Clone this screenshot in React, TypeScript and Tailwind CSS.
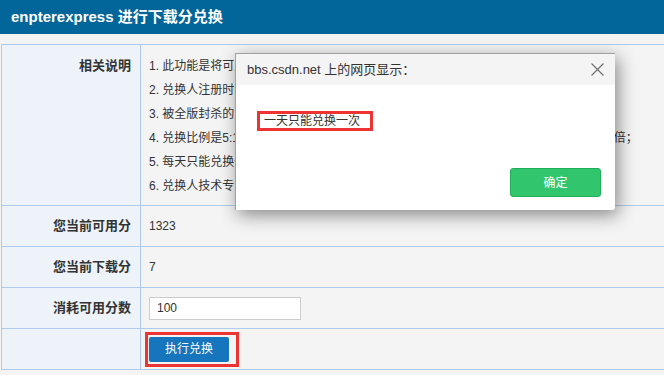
const font = "font-['Liberation_Sans','Noto_Sans_CJK_SC',sans-serif]";

const notes = [
  "1. 此功能是将可用分兑换为下载分，兑换后的下载分可用于下载资源；",
  "2. 兑换人注册时间需满三个月以上，且账号状态正常；",
  "3. 被全版封杀的用户不能使用此功能；",
  "4. 兑换比例是5:1，即每5个可用分兑换1个下载分，每次消耗的可用分数必须是10的整数倍；",
  "5. 每天只能兑换一次；",
  "6. 兑换人技术专家分需达到一定等级；",
];

const Row = ({
  label,
  children,
  tall,
}: {
  label?: string;
  children: React.ReactNode;
  tall?: boolean;
}) => (
  <div className="flex border-b border-[#aecbee]">
    <div
      className={
        tall
          ? "w-[139px] shrink-0 bg-[#eef3fa] border-r border-[#aecbee] pr-[9px] pt-[9px] text-right text-[13px] font-bold text-[#333] leading-[24px]"
          : "w-[139px] h-[40px] shrink-0 bg-[#eef3fa] border-r border-[#aecbee] pr-[9px] flex items-center justify-end text-[13px] font-bold text-[#333]"
      }
    >
      {label}
    </div>
    {children}
  </div>
);

export default function App() {
  return (
    <div className={`w-[664px] h-[375px] overflow-hidden bg-[#f4f4f4] relative ${font}`}>
      <div className="h-[34px] bg-[#03669a] pl-[11px] flex items-center text-[15px] font-bold text-white">
        enpterexpress 进行下载分兑换
      </div>

      <div className="mt-[10px] ml-px w-[700px] border-l border-t border-[#aecbee]">
        <Row label="相关说明" tall>
          <div className="pl-[8px] pt-[9px] pb-[7px] text-[12px] leading-[24px] text-[#333] whitespace-nowrap">
            {notes.map((n) => (
              <div key={n}>{n}</div>
            ))}
          </div>
        </Row>
        <Row label="您当前可用分">
          <div className="pl-[8px] flex items-center text-[12px] text-[#333]">1323</div>
        </Row>
        <Row label="您当前下载分">
          <div className="pl-[8px] flex items-center text-[12px] text-[#333]">7</div>
        </Row>
        <Row label="消耗可用分数">
          <div className="pl-[8px] flex items-center">
            <input
              defaultValue="100"
              className="w-[152px] h-[23px] border border-[#cccccc] bg-white px-[7px] text-[12px] text-[#333] outline-none"
            />
          </div>
        </Row>
        <Row>
          <div className="pl-[4px] flex items-center">
            <div className="border-[3px] border-[#ee3333] pt-[2px] pb-[2px] pl-px pr-[7px]">
              <button
                type="button"
                className="w-[80px] h-[25px] rounded-[2px] bg-[#1675bd] text-white text-[12px] flex items-center justify-center"
              >
                执行兑换
              </button>
            </div>
          </div>
        </Row>
      </div>

      {/* browser alert dialog */}
      <div className="absolute left-[235px] top-[53px] w-[380px] h-[157px] bg-white border-t border-l border-[#a0a0a0] rounded-br-[3px] shadow-[3px_5px_18px_rgba(0,0,0,0.45)] flex flex-col">
        <div className="h-[31px] bg-[#f4f4f4] flex items-center justify-between pl-[11px] pr-[10px]">
          <span className="text-[13px] text-[#333]">bbs.csdn.net 上的网页显示：</span>
          <svg width="13" height="13" viewBox="0 0 13 13" className="mr-px">
            <path d="M0.5 0.5 L12.5 12.5 M12.5 0.5 L0.5 12.5" stroke="#6b6b6b" strokeWidth="1.1" />
          </svg>
        </div>
        <div className="flex-1 flex flex-col pl-[21px] pr-[14px]">
          <div className="mt-[26px] w-[116px] h-[20px] border-[3px] border-[#ee3333] flex items-center pl-[4px] text-[12px] text-[#333] leading-none">
            一天只能兑换一次
          </div>
          <div className="flex-1" />
          <div className="flex justify-end mb-[13px]">
            <button
              type="button"
              className="w-[91px] h-[29px] rounded-[3px] bg-[#31c56d] border border-[#1fae5a] text-white text-[12px] flex items-center justify-center"
            >
              确定
            </button>
          </div>
        </div>
      </div>
    </div>
  );
}
